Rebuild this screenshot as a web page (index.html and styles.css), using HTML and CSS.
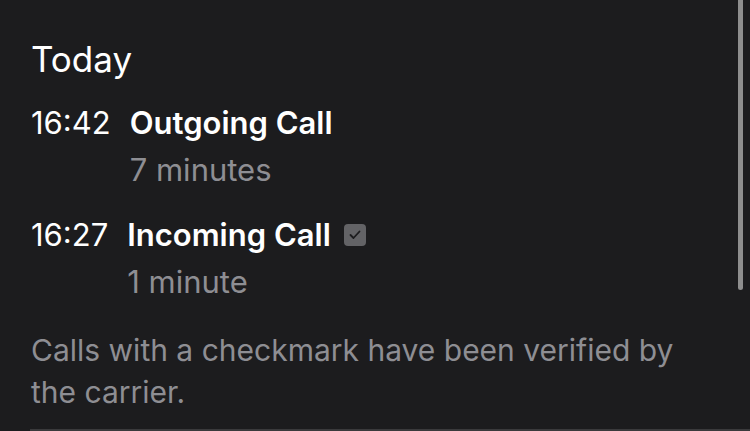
FILE: index.html
```html
<!DOCTYPE html>
<html lang="en">
<head>
  <meta charset="UTF-8">
  <meta name="viewport" content="width=device-width, initial-scale=1.0">
  <title>Call Details</title>
  <link rel="stylesheet" href="styles.css">
</head>
<body>
  <div class="page">
    <h1 class="day">Today</h1>

    <ul class="calls">
      <li class="call">
        <span class="time">16:42</span>
        <div class="info">
          <div class="kind">Outgoing Call</div>
          <div class="duration">7 minutes</div>
        </div>
      </li>
      <li class="call">
        <span class="time">16:27</span>
        <div class="info">
          <div class="kind">Incoming Call
            <span class="verified">
              <svg width="12" height="10" viewBox="0 0 12 10"><path d="M1.5 5 L4.5 8 L10.5 1.5" fill="none" stroke="#1c1c1e" stroke-width="1.8" stroke-linecap="round" stroke-linejoin="round"/></svg>
            </span>
          </div>
          <div class="duration">1 minute</div>
        </div>
      </li>
    </ul>

    <p class="note">Calls with a checkmark have been verified by the carrier.</p>
    <div class="divider"></div>
  </div>

  <div class="scrollbar"></div>
</body>
</html>
```

FILE: styles.css
```css
body {
  margin: 0;
  background-color: #1c1c1e;
  color: #fff;
  font-family: Inter, "Noto Sans", sans-serif;
  overflow: hidden;
}
.page {
  padding: 37px 32px 0 31px;
}
.day {
  margin: 0;
  font-size: 35px;
  font-weight: 400;
  line-height: 44px;
}
.calls {
  list-style: none;
  margin: 3px 0 0 0;
  padding: 0;
}
.call {
  display: flex;
  margin-top: 18px;
}
.time {
  font-size: 31px;
  line-height: 47px;
  margin-right: 19px;
}
.kind {
  font-size: 31px;
  font-weight: 600;
  line-height: 47px;
  display: flex;
  align-items: center;
}
.duration {
  font-size: 31px;
  line-height: 47px;
  color: #8e8e93;
}
.verified {
  display: inline-flex;
  align-items: center;
  justify-content: center;
  width: 22px;
  height: 22px;
  margin-left: 13px;
  border-radius: 4px;
  background-color: #636366;
}
.note {
  margin: 24px 0 0 0;
  font-size: 30px;
  line-height: 42px;
  color: #8e8e93;
}
.divider {
  margin: 16px -32px 0 -1px;
  height: 2px;
  background-color: #3a3a3c;
}
.scrollbar {
  position: absolute;
  top: 0;
  right: 7px;
  width: 5px;
  height: 290px;
  border-radius: 0 0 3px 3px;
  background-color: #8e8e8e;
}
```
